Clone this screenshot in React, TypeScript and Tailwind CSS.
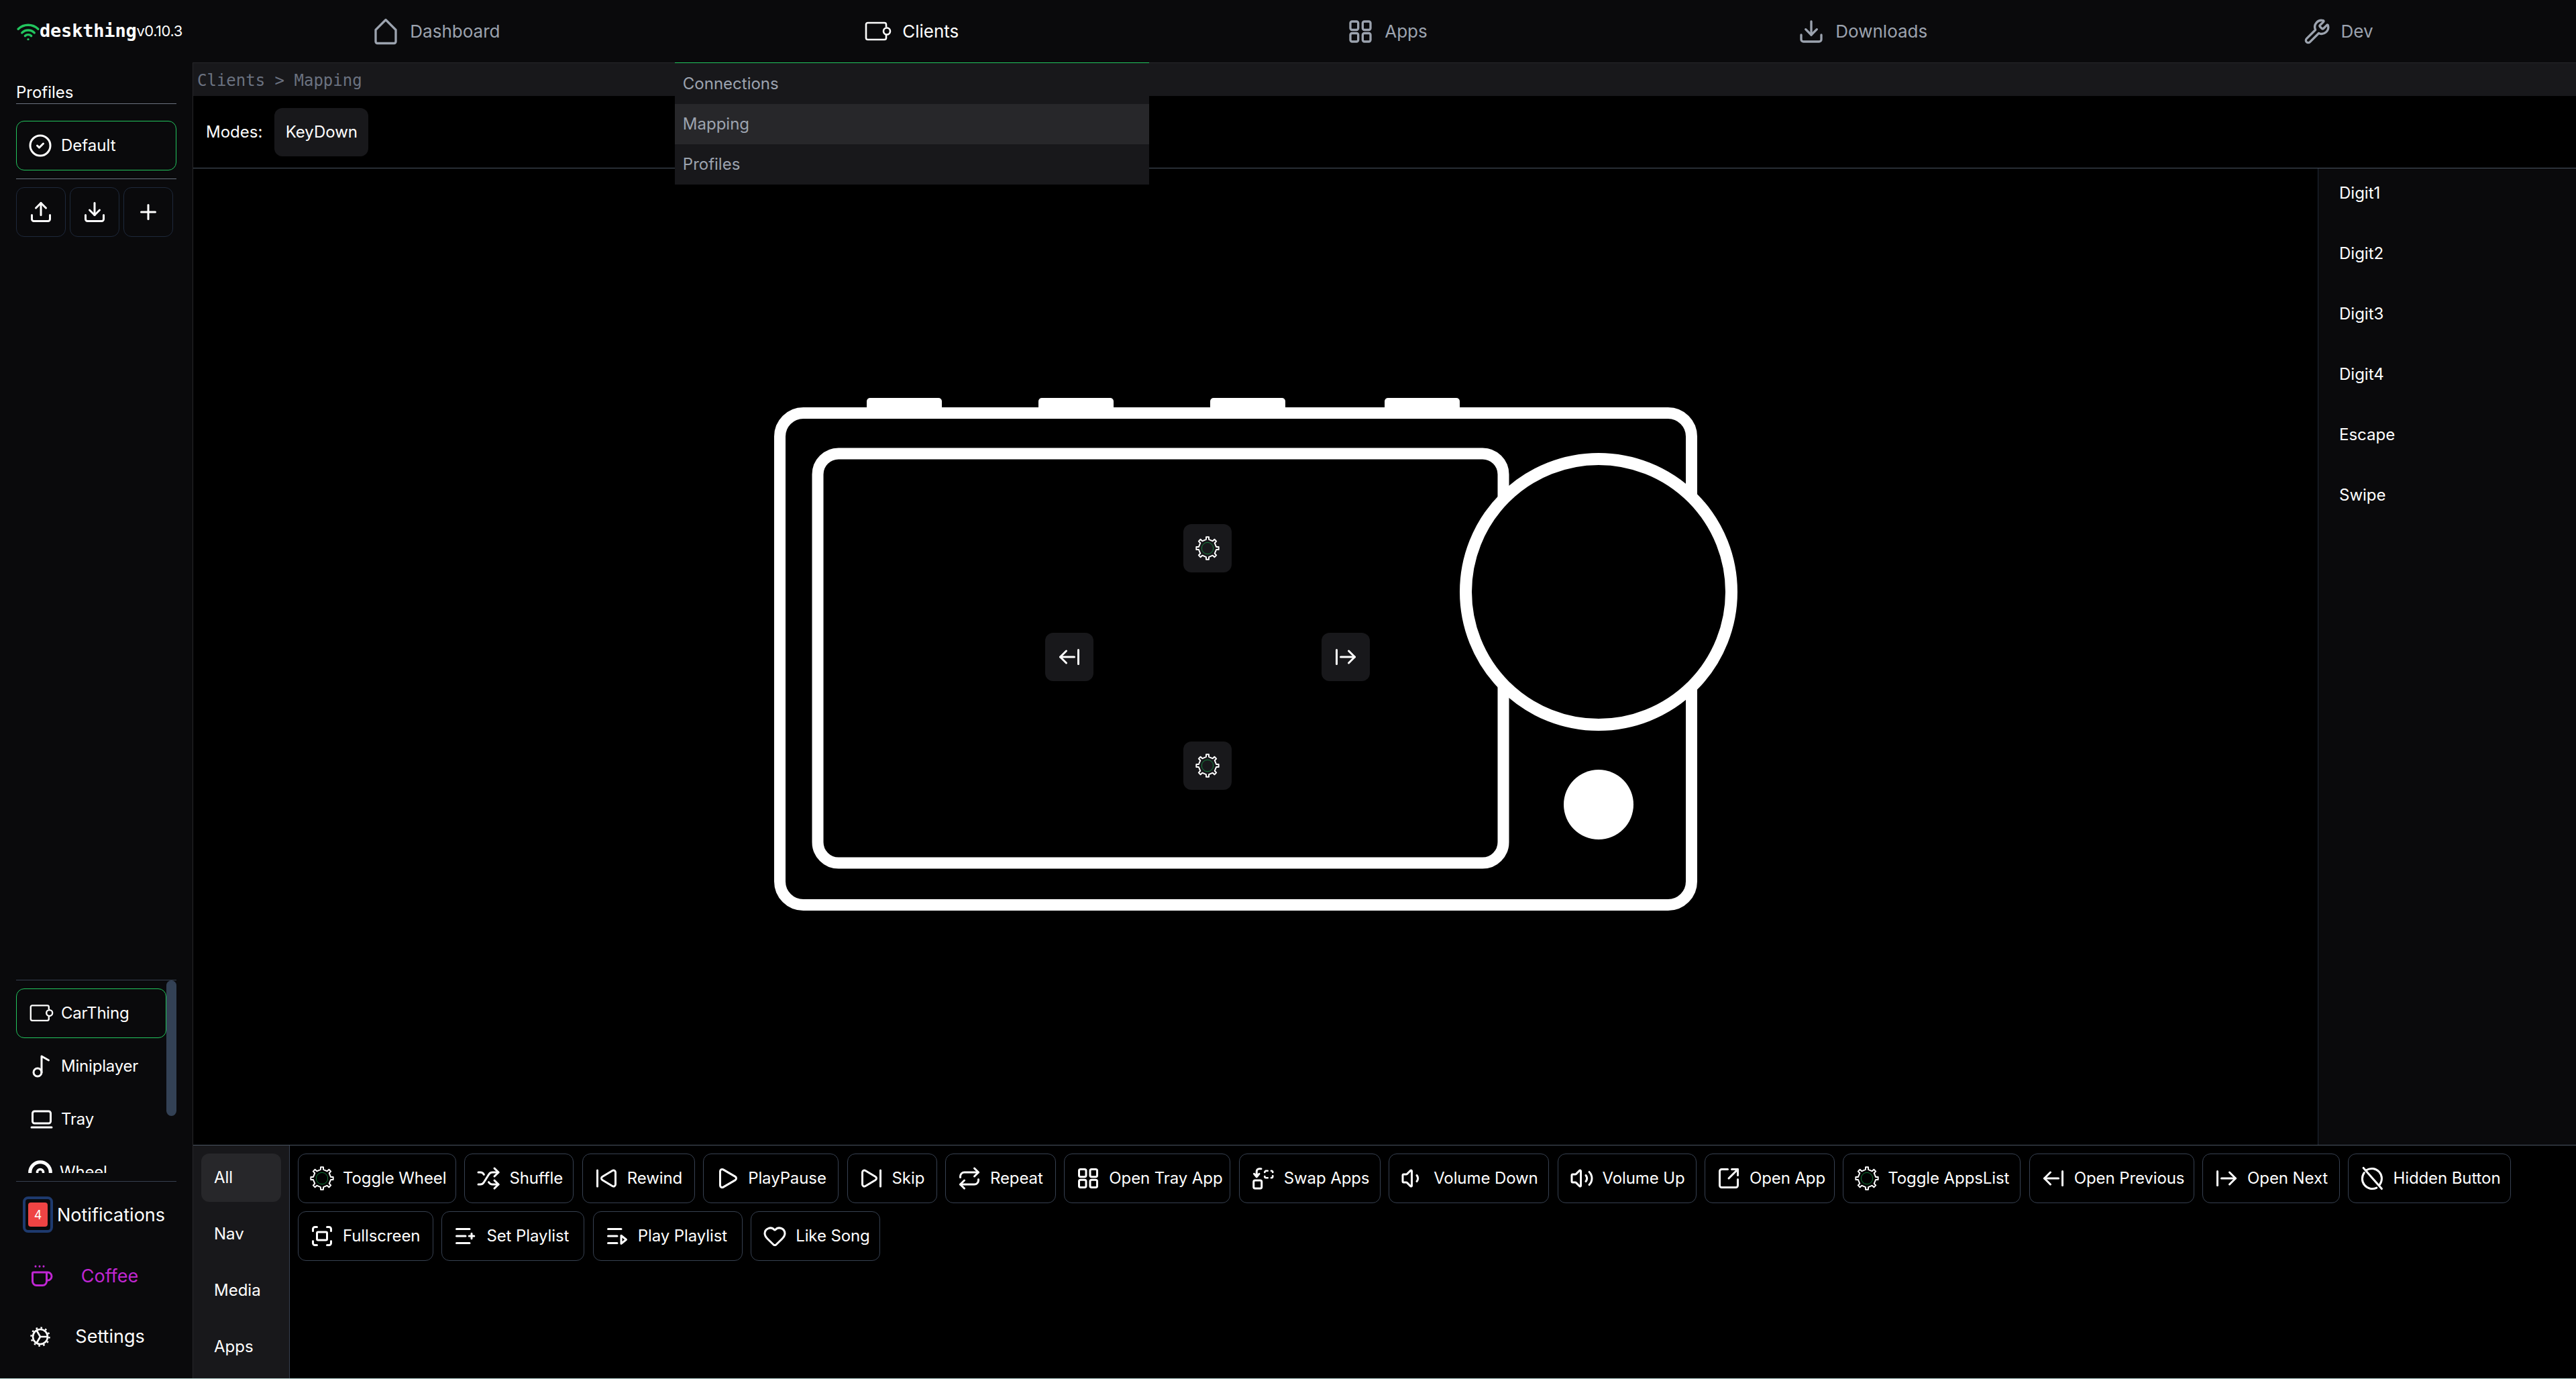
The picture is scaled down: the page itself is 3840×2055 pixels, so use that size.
import {
  Shuffle,
  SkipBack,
  Play,
  SkipForward,
  Repeat,
  Volume1,
  Volume2,
  SquareArrowOutUpRight,
  ArrowLeftFromLine,
  ArrowRightFromLine,
  Fullscreen,
  Heart,
  CircleCheck,
  Upload,
  Download,
  Plus,
  Wrench,
  Music2,
  LaptopMinimal,
} from 'lucide-react'
import type { ReactNode } from 'react'

const SANS = 'font-[Inter,"Noto_Sans",sans-serif]'

function gearPath(cx: number, cy: number, outer: number, inner: number, teeth: number) {
  const pts: string[] = []
  const step = (Math.PI * 2) / teeth
  for (let i = 0; i < teeth; i++) {
    const a = i * step - Math.PI / 2
    const corners: [number, number][] = [
      [inner, a - step * 0.2],
      [outer, a - step * 0.15],
      [outer, a + step * 0.15],
      [inner, a + step * 0.2],
    ]
    corners.forEach(([r, t]) => pts.push(`${(cx + r * Math.cos(t)).toFixed(2)} ${(cy + r * Math.sin(t)).toFixed(2)}`))
  }
  return 'M' + pts.join('L') + 'Z'
}

function Svg({ children, className = 'w-9 h-9' }: { children: ReactNode; className?: string }) {
  return (
    <svg
      viewBox="0 0 24 24"
      fill="none"
      stroke="currentColor"
      strokeWidth="2"
      strokeLinecap="round"
      strokeLinejoin="round"
      className={`${className} shrink-0`}
    >
      {children}
    </svg>
  )
}

function GearIcon() {
  return (
    <svg viewBox="0 0 24 24" fill="none" className="w-9 h-9 shrink-0" strokeLinejoin="round">
      <path d={gearPath(12, 12, 11.2, 8.8, 8)} stroke="currentColor" strokeWidth="1.3" />
      <circle cx="12" cy="12" r="5.8" stroke="#16a34a" strokeWidth="0.5" />
    </svg>
  )
}

function HomeIcon() {
  return (
    <Svg className="w-10 h-10">
      <path d="M3 10.5 12 1.5l9 9V21a1.5 1.5 0 0 1-1.5 1.5h-15A1.5 1.5 0 0 1 3 21Z" />
    </Svg>
  )
}

function ClientIcon({ className = 'w-10 h-10' }: { className?: string }) {
  return (
    <svg viewBox="0 0 40 40" fill="none" stroke="currentColor" strokeWidth="2.6" className={`${className} shrink-0`}>
      <path d="M32 13.5V9.5a2.5 2.5 0 0 0-2.5-2.5H4.5A2.5 2.5 0 0 0 2 9.5v20A2.5 2.5 0 0 0 4.5 32h25a2.5 2.5 0 0 0 2.5-2.5V25" />
      <circle cx="33" cy="19.5" r="5" />
    </svg>
  )
}

function GridIcon({ className = 'w-9 h-9' }: { className?: string }) {
  return (
    <Svg className={className}>
      <rect x="3" y="3" width="7" height="7.5" rx="1.5" />
      <rect x="14" y="3" width="7" height="7.5" rx="1.5" />
      <rect x="3" y="13.5" width="7" height="7.5" rx="1.5" />
      <rect x="14" y="13.5" width="7" height="7.5" rx="1.5" />
    </Svg>
  )
}

function SwapIcon() {
  return (
    <Svg>
      <rect x="2.5" y="14" width="8" height="8" rx="1.5" />
      <path d="M14.5 4.5h2M20 4.5a1.5 1.5 0 0 1 1.5 1.5v0M21.5 9.5v0.5a1.5 1.5 0 0 1-1.5 1.5M16.5 11.5h-1.5a1.5 1.5 0 0 1-1.5-1.5M13.5 6a1.5 1.5 0 0 1 1-1.4" strokeWidth="1.8" />
      <path d="M10 2.5H8a2.5 2.5 0 0 0-2.5 2.5v5M3 7.5l2.5 3 2.5-3" />
    </Svg>
  )
}

function HiddenIcon() {
  return (
    <Svg>
      <path d="M3.4 1.6 21.6 22.4" />
      <path d="M19.6 18.3A10 10 0 0 0 6.3 3.8M4.2 6.4a10 10 0 0 0 12.3 15" />
    </Svg>
  )
}

function ListPlusIcon() {
  return (
    <Svg>
      <path d="M3 5h13M3 12h9M3 19h13M18 9.5v5M15.5 12h5" />
    </Svg>
  )
}

function ListPlayIcon() {
  return (
    <Svg>
      <path d="M3 5h13M3 12h9M3 19h9" />
      <path d="M16 11.5v8l5-4Z" />
    </Svg>
  )
}

function WifiLogo() {
  return (
    <svg viewBox="0 0 36 28" fill="none" stroke="#22c55e" strokeWidth="3.6" strokeLinecap="round" className="w-[34px] h-[26px] shrink-0">
      <path d="M2 10a23 23 0 0 1 32 0" />
      <path d="M8 16a14 14 0 0 1 20 0" />
      <path d="M13 21a7 7 0 0 1 10 0" />
      <path d="M18 26.5v0.01" />
    </svg>
  )
}

function CoffeeIcon() {
  return (
    <Svg>
      <path d="M6 2v.2M10 2v.2M14 2v.2" />
      <path d="M16 8a1 1 0 0 1 1 1v8a4 4 0 0 1-4 4H7a4 4 0 0 1-4-4V9a1 1 0 0 1 1-1h14a4 4 0 1 1 0 8h-1" />
    </Svg>
  )
}

function WheelIcon() {
  return (
    <Svg>
      <circle cx="12" cy="12" r="10.2" strokeWidth="3.4" />
      <circle cx="12" cy="12" r="3" strokeWidth="2.4" />
    </Svg>
  )
}

function SettingsIcon() {
  return (
    <svg viewBox="0 0 30 30" fill="none" stroke="currentColor" strokeWidth="2.6" strokeLinejoin="round" className="w-[30px] h-[30px] shrink-0">
      <circle cx="15" cy="15" r="11" />
      <circle cx="15" cy="15" r="13.5" strokeWidth="2.4" strokeDasharray="2.6 4.47" />
      <path d="M9.5 5.5 15 15l-5.5 9.5M15 15h11" />
    </svg>
  )
}

const navItems = [
  { label: 'Dashboard', icon: <HomeIcon /> },
  { label: 'Clients', icon: <ClientIcon />, active: true },
  { label: 'Apps', icon: <GridIcon className="w-10 h-10" /> },
  { label: 'Downloads', icon: <Download className="w-10 h-10 shrink-0" /> },
  { label: 'Dev', icon: <Wrench className="w-10 h-10 shrink-0" /> },
]

const actions: { label: string; icon: ReactNode; width: string }[] = [
  { label: 'Toggle Wheel', icon: <GearIcon />, width: 'w-[236px]' },
  { label: 'Shuffle', icon: <Shuffle className="w-9 h-9 shrink-0" />, width: 'w-[163px]' },
  { label: 'Rewind', icon: <SkipBack className="w-9 h-9 shrink-0" />, width: 'w-[168px]' },
  { label: 'PlayPause', icon: <Play className="w-9 h-9 shrink-0" />, width: 'w-[202px]' },
  { label: 'Skip', icon: <SkipForward className="w-9 h-9 shrink-0" />, width: 'w-[134px]' },
  { label: 'Repeat', icon: <Repeat className="w-9 h-9 shrink-0" />, width: 'w-[165px]' },
  { label: 'Open Tray App', icon: <GridIcon />, width: 'w-[248px]' },
  { label: 'Swap Apps', icon: <SwapIcon />, width: 'w-[211px]' },
  { label: 'Volume Down', icon: <Volume1 className="w-9 h-9 shrink-0" />, width: 'w-[239px]' },
  { label: 'Volume Up', icon: <Volume2 className="w-9 h-9 shrink-0" />, width: 'w-[207px]' },
  { label: 'Open App', icon: <SquareArrowOutUpRight className="w-9 h-9 shrink-0" />, width: 'w-[194px]' },
  { label: 'Toggle AppsList', icon: <GearIcon />, width: 'w-[265px]' },
  { label: 'Open Previous', icon: <ArrowLeftFromLine className="w-9 h-9 shrink-0" />, width: 'w-[246px]' },
  { label: 'Open Next', icon: <ArrowRightFromLine className="w-9 h-9 shrink-0" />, width: 'w-[205px]' },
  { label: 'Hidden Button', icon: <HiddenIcon />, width: 'w-[243px]' },
  { label: 'Fullscreen', icon: <Fullscreen className="w-9 h-9 shrink-0" />, width: 'w-[202px]' },
  { label: 'Set Playlist', icon: <ListPlusIcon />, width: 'w-[213px]' },
  { label: 'Play Playlist', icon: <ListPlayIcon />, width: 'w-[223px]' },
  { label: 'Like Song', icon: <Heart className="w-9 h-9 shrink-0" />, width: 'w-[193px]' },
]

const keys = ['Digit1', 'Digit2', 'Digit3', 'Digit4', 'Escape', 'Swipe']

function Header() {
  return (
    <header className="flex h-[93px] shrink-0 bg-[#0a0a0c]">
      <div className="flex w-[296px] shrink-0 items-center pl-[25px]">
        <WifiLogo />
        <span className='font-["DejaVu_Sans_Mono",monospace] text-[27px] font-bold tracking-[-0.2px] text-white'>deskthing</span>
        <span className="text-[22px] tracking-[-0.5px] text-white">v0.10.3</span>
      </div>
      {navItems.map(item => (
        <div key={item.label} className="relative flex flex-1 items-center justify-center gap-4">
          <span className={item.active ? 'text-white' : 'text-[#9ca3af]'}>{item.icon}</span>
          <span className={`text-[26px] ${item.active ? 'text-white' : 'text-[#9ca3af]'}`}>{item.label}</span>
          {item.active && (
            <div className="absolute left-[1px] top-[93px] z-10 w-[707px] border-t border-[#22c55e] bg-[#18181b] text-[24px] text-[#9ca3af]">
              <div className="flex h-[61px] items-center px-[12px]">Connections</div>
              <div className="flex h-[60px] items-center bg-[#27272a] px-[12px]">Mapping</div>
              <div className="flex h-[60px] items-center px-[12px]">Profiles</div>
            </div>
          )}
        </div>
      ))}
    </header>
  )
}

function Sidebar() {
  return (
    <aside className="flex w-[288px] shrink-0 flex-col border-r border-[#27272a] bg-[#0a0a0c] pl-6 pr-6 text-[24px] text-white">
      <div className="flex h-[62px] items-end border-b border-[#6b7280] pb-[4px] leading-[24px]">Profiles</div>
      <div className="mt-[25px] flex h-[74px] items-center gap-[13px] rounded-xl border border-[#22c55e] pl-[17px]">
        <CircleCheck className="h-9 w-9 shrink-0" />
        Default
      </div>
      <div className="mt-3 flex gap-[6px] border-t border-[#6b7280] pt-3">
        {[Upload, Download, Plus].map((Icon, i) => (
          <div key={i} className="flex h-[74px] w-[74px] items-center justify-center rounded-xl border border-[#1e293b]">
            <Icon className="h-9 w-9" />
          </div>
        ))}
      </div>
      <div className="flex-1" />
      <div className="relative h-[301px] border-b border-t border-[#374151] pr-[15px] pt-[12px] tracking-[-0.2px]">
        <div className="h-[275px] overflow-hidden">
          <div className="flex h-[74px] items-center gap-[11px] rounded-xl border border-[#22c55e] pl-[19px]">
            <ClientIcon className="h-9 w-9" />
            CarThing
          </div>
          <div className="mt-[2px] flex h-[79px] items-center gap-[11px] pl-[20px]">
            <Music2 className="h-9 w-9 shrink-0" />
            Miniplayer
          </div>
          <div className="flex h-[79px] items-center gap-[11px] pl-[20px]">
            <LaptopMinimal className="h-9 w-9 shrink-0" />
            Tray
          </div>
          <div className="flex h-[79px] items-center gap-[11px] pl-[18px]">
            <WheelIcon />
            Wheel
          </div>
        </div>
        <div className="absolute right-0 top-0 h-[202px] w-[15px] rounded-lg bg-[#334155]" />
      </div>
      <div className="flex h-[293px] flex-col">
        <div className="mt-[21px] flex h-[56px] items-center">
          <div className="ml-[10px] flex h-[54px] w-[45px] shrink-0 items-center justify-center rounded-lg border-4 border-[#1e3a6e] p-1">
            <div className="flex h-9 w-[30px] items-center justify-center rounded bg-[#ef4444] text-[18px]">4</div>
          </div>
          <span className="ml-[6px] pt-[3px] text-[27px]">Notifications</span>
        </div>
        <div className="mt-[37px] flex h-[54px] items-center pl-[20px] text-[#c026d3]">
          <CoffeeIcon />
          <span className="flex-1 pr-[16px] text-center text-[27px]">Coffee</span>
        </div>
        <div className="mt-[36px] flex h-[54px] items-center pl-[21px]">
          <SettingsIcon />
          <span className="flex-1 pr-[10px] text-center text-[27px]">Settings</span>
        </div>
      </div>
    </aside>
  )
}

function MapButton({ children, className }: { children: ReactNode; className: string }) {
  return (
    <div className={`absolute flex h-[72px] w-[72px] items-center justify-center rounded-xl bg-[#18181b] text-white ${className}`}>
      {children}
    </div>
  )
}

function Device() {
  return (
    <div className="relative mb-[7px] h-[764px] w-[1436px]">
      <svg viewBox="0 0 1436 764" className="h-[764px] w-[1436px]" fill="none" stroke="white" strokeWidth="17">
        {[138, 394, 650, 910].map(x => (
          <rect key={x} x={x} y={0} width={112} height={20} rx={5} fill="white" stroke="none" />
        ))}
        <rect x="8.5" y="22.5" width="1359" height="733" rx="35" />
        <rect x="65" y="83" width="1022" height="610" rx="31" />
        <circle cx="1229" cy="289" r="198" fill="black" strokeWidth="18" />
        <circle cx="1229" cy="606" r="52" fill="white" stroke="none" />
      </svg>
      <MapButton className="left-[610px] top-[188px]"><GearIcon /></MapButton>
      <MapButton className="left-[610px] top-[512px]"><GearIcon /></MapButton>
      <MapButton className="left-[404px] top-[350px]"><ArrowLeftFromLine className="h-9 w-9" /></MapButton>
      <MapButton className="left-[816px] top-[350px]"><ArrowRightFromLine className="h-9 w-9" /></MapButton>
    </div>
  )
}

function Main() {
  return (
    <main className="flex min-w-0 flex-1 flex-col bg-black text-[24px] text-white">
      <div className='flex h-[50px] shrink-0 items-center border-t border-[#27272a] bg-[#18181b] pl-[6px] pt-[2px] font-["DejaVu_Sans_Mono",monospace] text-[24px] text-[#6b7280]'>
        Clients &gt; Mapping
      </div>
      <div className="flex h-[108px] shrink-0 items-center gap-[18px] border-b border-[#4b5563] pl-[19px]">
        <span>Modes:</span>
        <div className="flex h-[72px] w-[140px] items-center justify-center rounded-xl bg-[#18181b]">KeyDown</div>
      </div>
      <div className="flex min-h-0 flex-1">
        <div className="flex flex-1 items-center justify-center">
          <Device />
        </div>
        <div className="flex w-[385px] shrink-0 flex-col border-l border-[#1f2937] bg-[#0a0a0c] pl-[31px] pt-[12px]">
          {keys.map(k => (
            <div key={k} className="flex h-[90px] items-start pt-[7px]">{k}</div>
          ))}
        </div>
      </div>
      <div className="flex h-[348px] shrink-0 border-t border-[#4b5563]">
        <div className="flex w-[144px] shrink-0 flex-col gap-3 border-r border-[#374151] bg-[#18181b] pl-3 pr-3 pt-3">
          {['All', 'Nav', 'Media', 'Apps'].map((t, i) => (
            <div key={t} className={`flex h-[72px] shrink-0 items-center rounded-xl pl-[19px] ${i === 0 ? 'bg-[#27272a]' : ''}`}>{t}</div>
          ))}
        </div>
        <div className="flex flex-1 flex-wrap content-start gap-x-[12.4px] gap-y-3 pl-3 pt-3">
          {actions.map(b => (
            <div key={b.label} className={`flex h-[74px] items-center gap-[13px] rounded-xl border border-[#374151] pl-[17px] ${b.width}`}>
              {b.icon}
              <span className="whitespace-nowrap tracking-[-0.1px]">{b.label}</span>
            </div>
          ))}
        </div>
      </div>
    </main>
  )
}

export default function App() {
  return (
    <div className={`flex h-screen w-full flex-col overflow-hidden border-b border-[#c0dcd8] bg-black ${SANS}`}>
      <Header />
      <div className="flex min-h-0 flex-1">
        <Sidebar />
        <Main />
      </div>
    </div>
  )
}
